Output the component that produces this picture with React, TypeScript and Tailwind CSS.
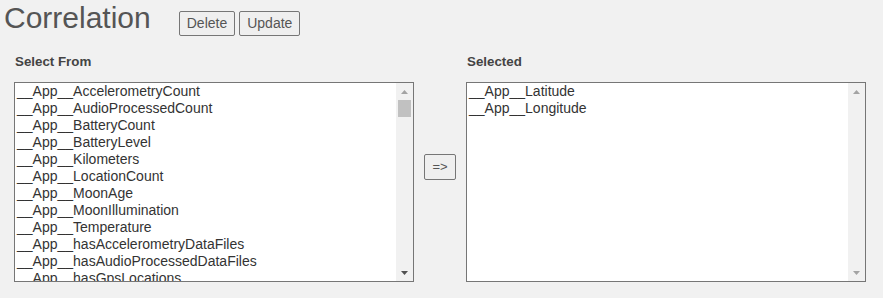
import React from "react";

const leftItems = [
  "AccelerometryCount",
  "AudioProcessedCount",
  "BatteryCount",
  "BatteryLevel",
  "Kilometers",
  "LocationCount",
  "MoonAge",
  "MoonIllumination",
  "Temperature",
  "hasAccelerometryDataFiles",
  "hasAudioProcessedDataFiles",
  "hasGpsLocations",
];

const rightItems = ["Latitude", "Longitude"];

function Arrow({ up, color }: { up: boolean; color: string }) {
  return (
    <svg width="7" height="4" viewBox="0 0 7 4" className="block">
      {up ? (
        <polygon points="0,4 7,4 3.5,0" fill={color} />
      ) : (
        <polygon points="0,0 7,0 3.5,4" fill={color} />
      )}
    </svg>
  );
}

function ListBox({ items, scrollable }: { items: string[]; scrollable: boolean }) {
  return (
    <div className="w-[400px] h-[200px] border border-[#767676] bg-white flex overflow-hidden">
      <div className="flex-1 overflow-hidden pl-[2px]">
        {items.map((it) => (
          <div
            key={it}
            className="h-[17px] leading-[17px] text-[14px] text-[#333] whitespace-nowrap"
          >
            __App__{it}
          </div>
        ))}
      </div>
      <div className="w-[17px] h-full bg-[#f1f1f1] flex flex-col">
        <div className="h-[17px] flex items-center justify-center">
          <Arrow up color="#a3a3a3" />
        </div>
        <div className="flex-1 px-[2px]">
          {scrollable && <div className="h-[17px] w-full bg-[#c1c1c1]" />}
        </div>
        <div className="h-[17px] flex items-center justify-center">
          <Arrow up={false} color={scrollable ? "#505050" : "#a3a3a3"} />
        </div>
      </div>
    </div>
  );
}

export default function App() {
  return (
    <div
      className="w-full h-[298px] bg-[#f1f1f1] overflow-hidden"
      style={{ fontFamily: '"Liberation Sans", Arial, sans-serif' }}
    >
      <div className="flex items-baseline pl-[4px] pt-[1px] h-[36px]">
        <h1 className="text-[30px] leading-[34px] text-[#555] font-normal">Correlation</h1>
        <button className="ml-[28px] h-[25px] px-[7px] text-[14px] text-[#555] bg-[#efefef] border border-[#767676] rounded-[2px] leading-[16px]">
          Delete
        </button>
        <button className="ml-[4px] h-[25px] px-[7px] text-[14px] text-[#555] bg-[#efefef] border border-[#767676] rounded-[2px] leading-[16px]">
          Update
        </button>
      </div>
      <div className="flex pl-[14px] mt-[18px]">
        <div className="w-[400px] flex flex-col">
          <div className="h-[16px] leading-[16px] text-[13.33px] font-bold text-[#444] pl-[1px] mb-[12px]">
            Select From
          </div>
          <ListBox items={leftItems} scrollable />
        </div>
        <div className="w-[52px] flex items-center justify-center">
          <button className="w-[32px] h-[26px] text-[13px] text-[#555] bg-[#efefef] border border-[#767676] rounded-[2px] flex items-center justify-center mt-[-2px]">
            =&gt;
          </button>
        </div>
        <div className="w-[400px] flex flex-col">
          <div className="h-[16px] leading-[16px] text-[13.33px] font-bold text-[#444] pl-[1px] mb-[12px]">
            Selected
          </div>
          <ListBox items={rightItems} scrollable={false} />
        </div>
      </div>
    </div>
  );
}
